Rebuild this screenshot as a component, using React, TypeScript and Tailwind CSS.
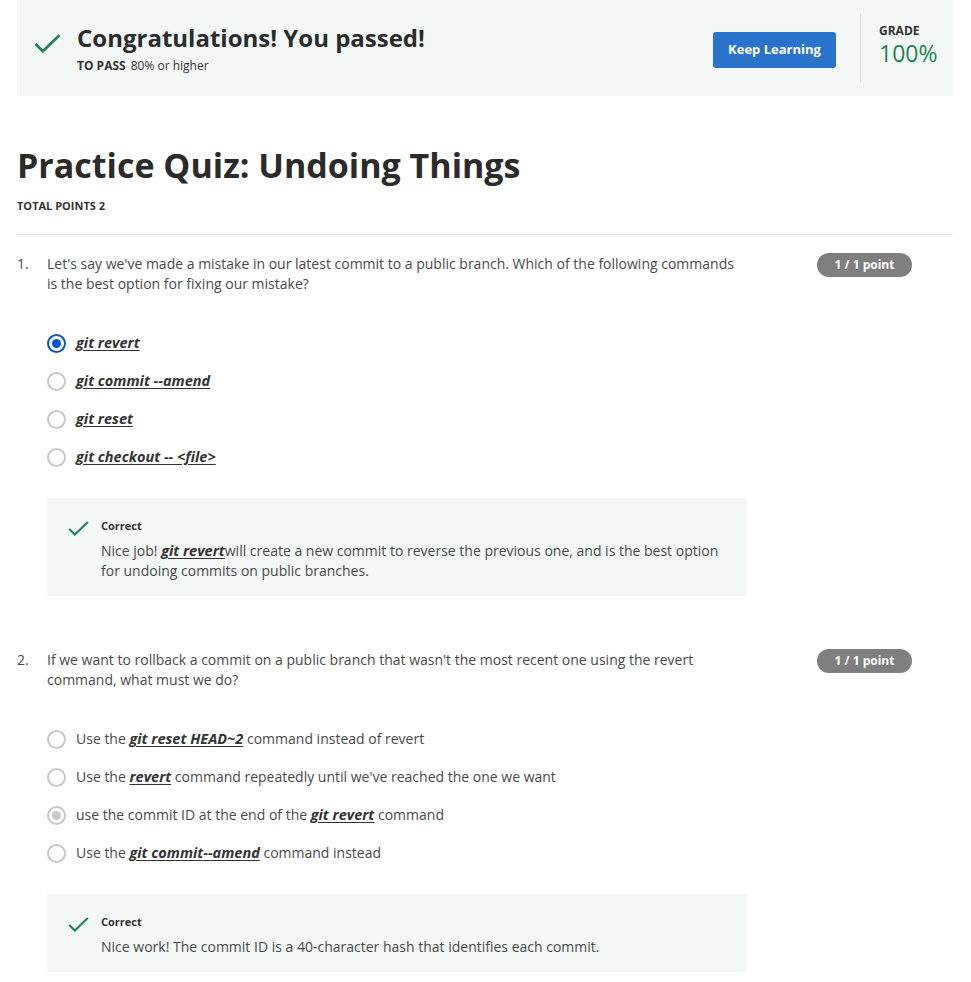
import React from "react";

const Check = ({ className }: { className?: string }) => (
  <svg viewBox="0 0 26 18" className={className} fill="none">
    <path d="M1.5 9.5 L8.5 16.5 L24.5 1" stroke="#1f8354" strokeWidth="2.6" />
  </svg>
);

const Radio = ({ state }: { state: "on" | "off" | "dim" }) => {
  if (state === "on")
    return (
      <span className="flex h-[19px] w-[19px] shrink-0 items-center justify-center rounded-full border-2 border-[#0056d2]">
        <span className="h-[9px] w-[9px] rounded-full bg-[#0056d2]" />
      </span>
    );
  if (state === "dim")
    return (
      <span className="flex h-[19px] w-[19px] shrink-0 items-center justify-center rounded-full border-2 border-[#c8c8c8]">
        <span className="h-[9px] w-[9px] rounded-full bg-[#c8c8c8]" />
      </span>
    );
  return <span className="h-[19px] w-[19px] shrink-0 rounded-full border-2 border-[#c8c8c8]" />;
};

const Code = ({ children }: { children: React.ReactNode }) => (
  <span className="text-[14.5px] font-bold italic underline underline-offset-2 text-[#333]">{children}</span>
);

const Badge = () => (
  <div className="mt-[-11px] flex h-[24px] w-[95px] shrink-0 items-center justify-center rounded-full bg-[#7f7f7f] text-[12px] font-bold text-white">
    1 / 1 point
  </div>
);

const Feedback = ({ children }: { children: React.ReactNode }) => (
  <div className="ml-[30px] w-[700px] bg-[#f3f8f7] pl-[21px] pr-6 pt-[20px] pb-[15px]">
    <div className="flex gap-[12px]">
      <Check className="mt-[3px] h-[15px] w-[21px] shrink-0" />
      <div>
        <div className="text-[11px] font-bold text-[#333] leading-[16px]">Correct</div>
        <div className="mt-[7px] text-[14px] leading-[20px] text-[#4a4a4a]">{children}</div>
      </div>
    </div>
  </div>
);

const Option = ({ state, children }: { state: "on" | "off" | "dim"; children: React.ReactNode }) => (
  <div className="flex h-[38px] items-center gap-[10px]">
    <Radio state={state} />
    <div className="text-[14px] text-[#4a4a4a]">{children}</div>
  </div>
);

export default function App() {
  return (
    <div className="min-h-[982px] bg-white px-[17px] pr-[18px] font-['Open_Sans',sans-serif] text-[#333]">
      <div className="flex h-[96px] items-center bg-[#f3f8f7] pl-[17px]">
        <Check className="mb-[10px] h-[19px] w-[27px] shrink-0" />
        <div className="ml-[16px] flex-1">
          <div className="text-[24px] font-bold leading-[30px] text-[#2b2b2b]">Congratulations! You passed!</div>
          <div className="mt-[6px] text-[12px] leading-[14px] text-[#333]">
            <span className="font-bold">TO PASS</span>
            <span className="ml-[5px]">80% or higher</span>
          </div>
        </div>
        <button className="mt-[4px] h-[36px] w-[123px] rounded-[3px] bg-[#2a73cc] text-[13px] font-bold text-white">
          Keep Learning
        </button>
        <div className="ml-[24px] h-[68px] w-px bg-[#dcdcdc]" />
        <div className="ml-[18px] w-[74px] self-start pt-[24px]">
          <div className="text-[12px] font-bold leading-[14px] text-[#333]">GRADE</div>
          <div className="text-[23px] leading-[30px] text-[#1f8354]">100%</div>
        </div>
      </div>

      <h1 className="mt-[47px] text-[34px] font-bold leading-[44px] text-[#2b2b2b]">Practice Quiz: Undoing Things</h1>
      <div className="mt-[12px] text-[11px] font-bold leading-[14px] text-[#333]">TOTAL POINTS 2</div>
      <div className="mt-[21px] h-px bg-[#e1e1e1]" />

      <div className="pt-[19px]">
        <div className="flex">
          <div className="w-[30px] shrink-0 text-[14px] leading-[20px] text-[#4a4a4a]">1.</div>
          <div className="w-[700px] text-[14px] leading-[20px] text-[#4a4a4a]">
            Let's say we've made a mistake in our latest commit to a public branch. Which of the following commands is the best option for fixing our mistake?
          </div>
          <div className="ml-[70px] pt-[10px]">
            <Badge />
          </div>
        </div>
        <div className="ml-[30px] mt-[30px]">
          <Option state="on"><Code>git revert</Code></Option>
          <Option state="off"><Code>git commit --amend</Code></Option>
          <Option state="off"><Code>git reset</Code></Option>
          <Option state="off"><Code>git checkout -- &lt;file&gt;</Code></Option>
        </div>
        <div className="mt-[22px]">
          <Feedback>
            Nice job! <Code>git revert</Code>will create a new commit to reverse the previous one, and is the best option for undoing commits on public branches.
          </Feedback>
        </div>
      </div>

      <div className="pt-[54px]">
        <div className="flex">
          <div className="w-[30px] shrink-0 text-[14px] leading-[20px] text-[#4a4a4a]">2.</div>
          <div className="w-[700px] text-[14px] leading-[20px] text-[#4a4a4a]">
            If we want to rollback a commit on a public branch that wasn't the most recent one using the revert command, what must we do?
          </div>
          <div className="ml-[70px] pt-[10px]">
            <Badge />
          </div>
        </div>
        <div className="ml-[30px] mt-[30px]">
          <Option state="off">Use the <Code>git reset HEAD~2</Code> command instead of revert</Option>
          <Option state="off">Use the <Code>revert</Code> command repeatedly until we've reached the one we want</Option>
          <Option state="dim">use the commit ID at the end of the <Code>git revert</Code> command</Option>
          <Option state="off">Use the <Code>git commit--amend</Code> command instead</Option>
        </div>
        <div className="mt-[22px]">
          <Feedback>Nice work! The commit ID is a 40-character hash that identifies each commit.</Feedback>
        </div>
      </div>
    </div>
  );
}
